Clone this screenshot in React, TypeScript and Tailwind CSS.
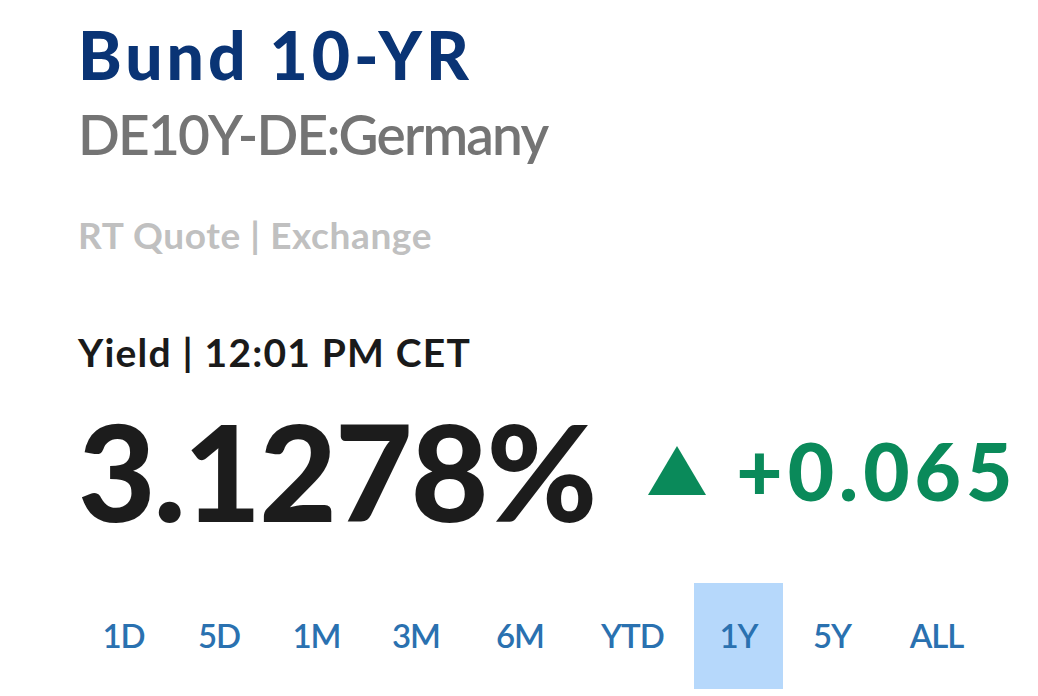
import React from "react";

const tabs: { label: string; w: string }[] = [
  { label: "1D", w: "w-[89px]" },
  { label: "5D", w: "w-[96px]" },
  { label: "1M", w: "w-[93px]" },
  { label: "3M", w: "w-[100px]" },
  { label: "6M", w: "w-[102px]" },
  { label: "YTD", w: "w-[117px]" },
  { label: "1Y", w: "w-[89px]" },
  { label: "5Y", w: "w-[92px]" },
  { label: "ALL", w: "w-[111px]" },
];

export default function App() {
  return (
    <div className="w-[1038px] h-[696px] bg-white overflow-hidden font-['Lato','Noto_Sans',sans-serif]">
      <div className="flex flex-col pl-[78px] pt-[20px]">
        <div className="text-[66px] leading-[70px] font-black text-[#0a3475] tracking-[4px]">Bund 10-YR</div>
        <div className="mt-[14px] text-[55px] leading-[60px] font-semibold text-[#747474] tracking-[-1.8px]">DE10Y-DE:Germany</div>
        <div className="mt-[49px] text-[37px] leading-[44px] font-bold text-[#c0c0c0] tracking-[0.6px]">RT Quote | Exchange</div>
        <div className="mt-[73px] text-[39px] leading-[44px] font-bold text-[#1a1a1a] tracking-[1.2px]">Yield | 12:01 PM CET</div>
        <div className="mt-[32px] flex items-center">
          <span className="text-[134px] leading-[130px] font-black text-[#1c1c1c] tracking-[-2px]">3.1278%</span>
          <span className="ml-[53px] mt-[-2px] flex items-center text-[#0a8a5a]">
            <svg width="58" height="49" viewBox="0 0 58 49">
              <polygon points="29,0 58,49 0,49" fill="#0a8a5a" />
            </svg>
            <span className="ml-[30px] text-[80px] leading-[80px] font-black tracking-[5px]">+0.065</span>
          </span>
        </div>
        <div className="mt-[47px] ml-[1px] flex gap-[3px]">
          {tabs.map((t) => (
            <div
              key={t.label}
              className={
                t.w +
                " h-[106px] flex items-center justify-center text-[33px] font-semibold text-[#2a71b0] tracking-[-1px] " +
                (t.label === "1Y" ? "bg-[#b6d8fb]" : "")
              }
            >
              {t.label}
            </div>
          ))}
        </div>
      </div>
    </div>
  );
}
